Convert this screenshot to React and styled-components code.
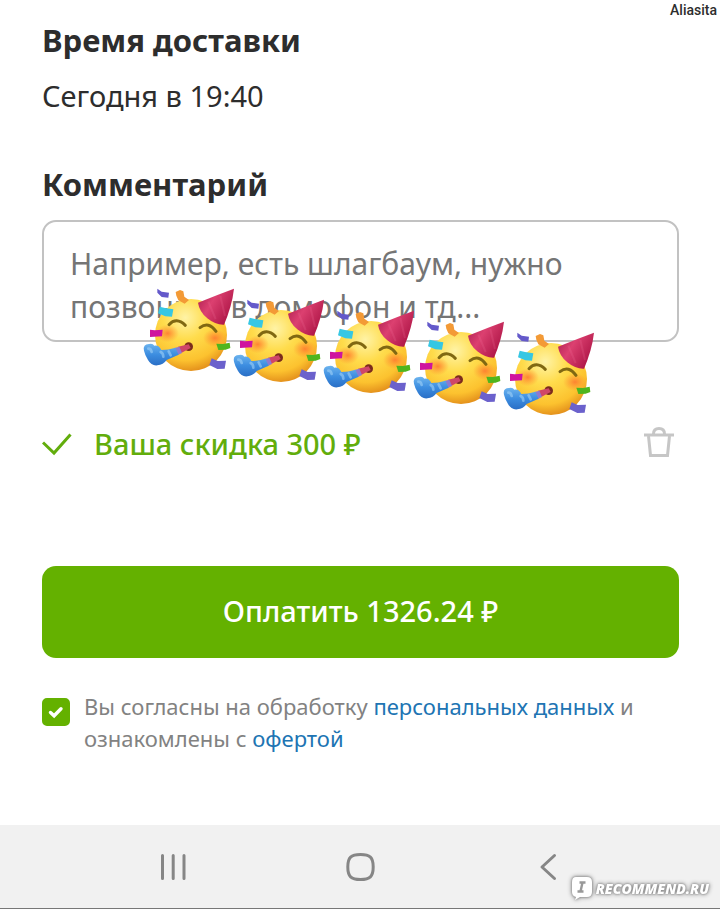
import React from "react"
import styled, { createGlobalStyle } from "styled-components"

const colors = {
  green: "#64b100",
  greenText: "#62ad0c",
  dark: "#2d2d2d",
  grey: "#828282",
  link: "#2074b3",
}

const party = [0, 1, 2, 3, 4]

const App = () => {
  return (
    <>
      <GlobalStyle />
      <Page>
        <Author>Aliasita</Author>
        <Checkout onSubmit={e => e.preventDefault()}>
          <Title>Время доставки</Title>
          <DeliveryTime>Сегодня в 19:40</DeliveryTime>

          <Title as="label" htmlFor="comment">
            Комментарий
          </Title>
          <CommentField>
            <Comment
              id="comment"
              rows={2}
              placeholder="Например, есть шлагбаум, нужно позвонить в домофон и тд..."
            />
            <Stickers>
              {party.map(step => (
                <Sticker key={step} $step={step}>
                  <PartyFace />
                </Sticker>
              ))}
            </Stickers>
          </CommentField>

          <Discount>
            <CheckIcon />
            <DiscountText>Ваша скидка 300 ₽</DiscountText>
            <RemoveButton type="button" aria-label="Удалить скидку">
              <TrashIcon />
            </RemoveButton>
          </Discount>

          <PayButton type="submit">Оплатить 1326.24 ₽</PayButton>

          <Consent>
            <CheckboxBox>
              <Checkbox id="consent" type="checkbox" defaultChecked />
              <Tick viewBox="0 0 28 28" aria-hidden="true">
                <path d="M8.5 14.5l3.6 3.3 6.9-7" />
              </Tick>
            </CheckboxBox>
            <ConsentText htmlFor="consent">
              Вы согласны на обработку <Link href="#data">персональных данных</Link>{" "}
              и ознакомлены с <Link href="#offer">офертой</Link>
            </ConsentText>
          </Consent>
        </Checkout>

        <NavBar>
          <NavButton type="button" aria-label="Недавние">
            <NavIcon viewBox="0 0 32 32">
              <path d="M5.5 4.5v23M16.2 4.5v23M27 4.5v23" />
            </NavIcon>
          </NavButton>
          <NavButton type="button" aria-label="Домой">
            <NavIcon viewBox="0 0 32 32">
              <path d="M16.500 3.500c9.500 0 12.700 3 12.700 12.500s-3.200 12.500-12.700 12.500S3.800 25.500 3.800 16 7 3.500 16.500 3.500z" />
            </NavIcon>
          </NavButton>
          <NavButton type="button" aria-label="Назад">
            <NavIcon viewBox="0 0 32 32">
              <path d="M23.500 4.500L11 16l12.500 11.500" />
            </NavIcon>
          </NavButton>
          <Watermark>
            <BubbleIcon />
            <span>RECOMMEND.RU</span>
          </Watermark>
        </NavBar>
      </Page>
    </>
  )
}

export default App

const CheckIcon = () => (
  <DiscountCheck viewBox="0 0 30 24" aria-hidden="true">
    <path d="M1 10.500L12 21 28.500 2.500" />
  </DiscountCheck>
)

const TrashIcon = () => (
  <svg width="32" height="34" viewBox="0 0 32 34" fill="none" stroke="#c6c6c6" strokeWidth="3">
    <path d="M1 8h30" />
    <path d="M10.500 7c0-4 2.500-5.500 5.500-5.500s5.500 1.500 5.500 5.500" />
    <path d="M5.500 9l2 19.500h17l2-19.500" />
  </svg>
)

const BubbleIcon = () => (
  <svg width="22" height="25" viewBox="0 0 22 25">
    <path
      d="M5 1h11q5 0 5 5v10q0 5-5 5h-7l-5 3 1-3q-4-1-4-5V6q0-5 4-5z"
      fill="#fff"
    />
    <path d="M8.500 6.500h6M6.500 15.500h6M11.500 6.500l-2 9" stroke="#999" strokeWidth="2.400" />
  </svg>
)

const PartyFace = () => (
  <svg width="100" height="95" viewBox="0 0 300 285" aria-hidden="true">
    <defs>
      <radialGradient id="face" cx="0.42" cy="0.26" r="0.76">
        <stop offset="0" stopColor="#fff3a6" />
        <stop offset="0.4" stopColor="#ffdc4c" />
        <stop offset="0.78" stopColor="#fcc22f" />
        <stop offset="1" stopColor="#e28d1a" />
      </radialGradient>
      <radialGradient id="blush">
        <stop offset="0" stopColor="#ff7630" stopOpacity="0.85" />
        <stop offset="1" stopColor="#ff8a30" stopOpacity="0" />
      </radialGradient>
      <linearGradient id="hat" x1="0" y1="0" x2="1" y2="0.6">
        <stop offset="0" stopColor="#a91c4e" />
        <stop offset="0.45" stopColor="#dc4070" />
        <stop offset="1" stopColor="#ae1647" />
      </linearGradient>
      <linearGradient id="horn" x1="0" y1="0" x2="0" y2="1">
        <stop offset="0" stopColor="#6db4ee" />
        <stop offset="0.5" stopColor="#3c8de0" />
        <stop offset="1" stopColor="#2a6fc6" />
      </linearGradient>
    </defs>

    <ellipse cx="153" cy="165" rx="108" ry="108" fill="url(#face)" />
    <ellipse cx="83" cy="160" rx="34" ry="27" fill="url(#blush)" />
    <ellipse cx="225" cy="174" rx="36" ry="27" fill="url(#blush)" />

    <g fill="none" stroke="#806812" strokeWidth="9" strokeLinecap="round">
      <path d="M87 134q22-24 49 2" />
      <path d="M180 143q26-20 48 11" />
    </g>

    <path d="M174 68Q230 45 282 26Q276 78 252 134Q226 135 202 115T174 68z" fill="url(#hat)" />
    <path d="M205 65l22 52M241 48l14 60" stroke="#f0709a" strokeWidth="6" opacity="0.2" />

    <ellipse cx="146" cy="200" rx="13" ry="13" fill="#7b2c1c" />
    <path d="M146 193L114 200l8 20 30-16z" fill="#cf4668" />
    <path d="M118 200l8 19-14 7-9-22z" fill="#8f79cf" />
    <path
      d="M106 203Q86 210 64 210Q56 194 43 197Q38 189 27 192Q8 192 12 212Q15 226 24 240Q34 258 52 256Q70 254 80 240L116 224z"
      fill="url(#horn)"
    />
    <path
      d="M25 206q8 0 10 10M62 216q8 4 8 14M86 214l6 12"
      fill="none"
      stroke="#9ed0f6"
      strokeWidth="8"
      strokeLinecap="round"
      opacity="0.6"
    />

    <path d="M52 26l13 9 22 3-2 15-20-2-13-13z" fill="#6459ca" />
    <path d="M107 36l13-6 10 4 3 16 14 10-13 11-19-10-6-14z" fill="#f39a36" />
    <path d="M59 80l16 4 25 4-4 22-20-1-22-9z" fill="#36c7e3" />
    <path d="M30 149l14 2 24-2-2 20-36 2z" fill="#cf149e" />
    <path d="M229 191l20 1 20-4 2 16-14 5-22 1z" fill="#4fb51e" />
    <path d="M215 235l18 8 25-1-4 24-22 1-24-12z" fill="#6b61cc" />
  </svg>
)

const GlobalStyle = createGlobalStyle`
  * {
    box-sizing: border-box;
  }

  body {
    margin: 0;
    background: #fff;
    color: ${colors.dark};
    font-family: "Noto Sans", sans-serif;
  }
`

const Page = styled.div`
  display: flex;
  flex-direction: column;
  min-height: 100vh;
`

const Author = styled.div`
  padding: 0 3px;
  font-family: Roboto, sans-serif;
  font-size: 14px;
  font-weight: 500;
  line-height: 20px;
  text-align: right;
`

const Checkout = styled.form`
  display: flex;
  flex-direction: column;
  padding: 0 41px 32px 42px;
`

const Title = styled.h2`
  margin: 0;
  font-size: 31px;
  font-weight: 700;
  line-height: 40px;
`

const DeliveryTime = styled.p`
  margin: 16px 0 48px;
  font-size: 29px;
  line-height: 40px;
`

const CommentField = styled.div`
  position: relative;
  margin: 16px 0 82px;
`

const Comment = styled.textarea`
  display: block;
  width: 100%;
  height: 122px;
  padding: 20px 26px;
  border: 2px solid #c2c2c2;
  border-radius: 14px;
  background: #fff;
  color: ${colors.dark};
  font-family: inherit;
  font-size: 30px;
  line-height: 43px;
  resize: none;
  overflow: hidden;

  &::placeholder {
    color: #757575;
    opacity: 1;
  }
`

const Stickers = styled.div`
  position: absolute;
  top: 60px;
  left: 98px;
  display: flex;
  pointer-events: none;
`

const Sticker = styled.div`
  width: 90px;
  margin-top: ${({ $step }) => $step * 11}px;

  svg {
    display: block;
    overflow: visible;
  }
`

const Discount = styled.div`
  display: flex;
  align-items: center;
  color: ${colors.greenText};
`

const DiscountCheck = styled.svg`
  width: 30px;
  height: 24px;
  fill: none;
  stroke: currentColor;
  stroke-width: 3;
`

const DiscountText = styled.span`
  flex: 1;
  padding-left: 22px;
  font-size: 29px;
  font-weight: 500;
  line-height: 40px;
`

const RemoveButton = styled.button`
  display: flex;
  padding: 0 4px;
  border: 0;
  background: none;
  cursor: pointer;
`

const PayButton = styled.button`
  height: 92px;
  margin: 102px 0 32px;
  padding: 0 0 4px;
  border: 0;
  border-radius: 14px;
  background: ${colors.green};
  color: #fff;
  font-family: inherit;
  font-size: 29px;
  font-weight: 500;
  cursor: pointer;
`

const Consent = styled.div`
  display: flex;
  align-items: flex-start;
  gap: 14px;
`

const CheckboxBox = styled.div`
  display: grid;
  flex-shrink: 0;
  padding-top: 8px;
`

const Checkbox = styled.input`
  grid-area: 1 / 1;
  width: 28px;
  height: 28px;
  margin: 0;
  appearance: none;
  border: 2px solid ${colors.green};
  border-radius: 5px;

  &:checked {
    background: ${colors.green};
  }
`

const Tick = styled.svg`
  grid-area: 1 / 1;
  width: 28px;
  height: 28px;
  fill: none;
  stroke: #fff;
  stroke-width: 3.4;
  stroke-linecap: round;
  pointer-events: none;
`

const ConsentText = styled.label`
  color: ${colors.grey};
  font-size: 22px;
  line-height: 32px;
`

const Link = styled.a`
  color: ${colors.link};
  text-decoration: none;
`

const NavBar = styled.nav`
  position: relative;
  display: flex;
  align-items: center;
  height: 84px;
  margin-top: auto;
  padding: 0 80px;
  border-bottom: 1px solid #777;
  background: #f1f1f1;
`

const NavButton = styled.button`
  display: flex;
  flex: 1;
  justify-content: center;
  padding: 0;
  border: 0;
  background: none;
`

const NavIcon = styled.svg`
  width: 32px;
  height: 32px;
  fill: none;
  stroke: #868686;
  stroke-width: 3;
  stroke-linecap: round;
  stroke-linejoin: round;
`

const Watermark = styled.div`
  position: absolute;
  right: 11px;
  bottom: 7px;
  display: flex;
  align-items: center;
  gap: 3px;
  color: #fff;
  font-family: "Open Sans", sans-serif;
  font-size: 14px;
  font-style: italic;
  font-weight: 800;
  line-height: 22px;
  filter: drop-shadow(0 0 1px #888) drop-shadow(0 0 2px #888);
`
